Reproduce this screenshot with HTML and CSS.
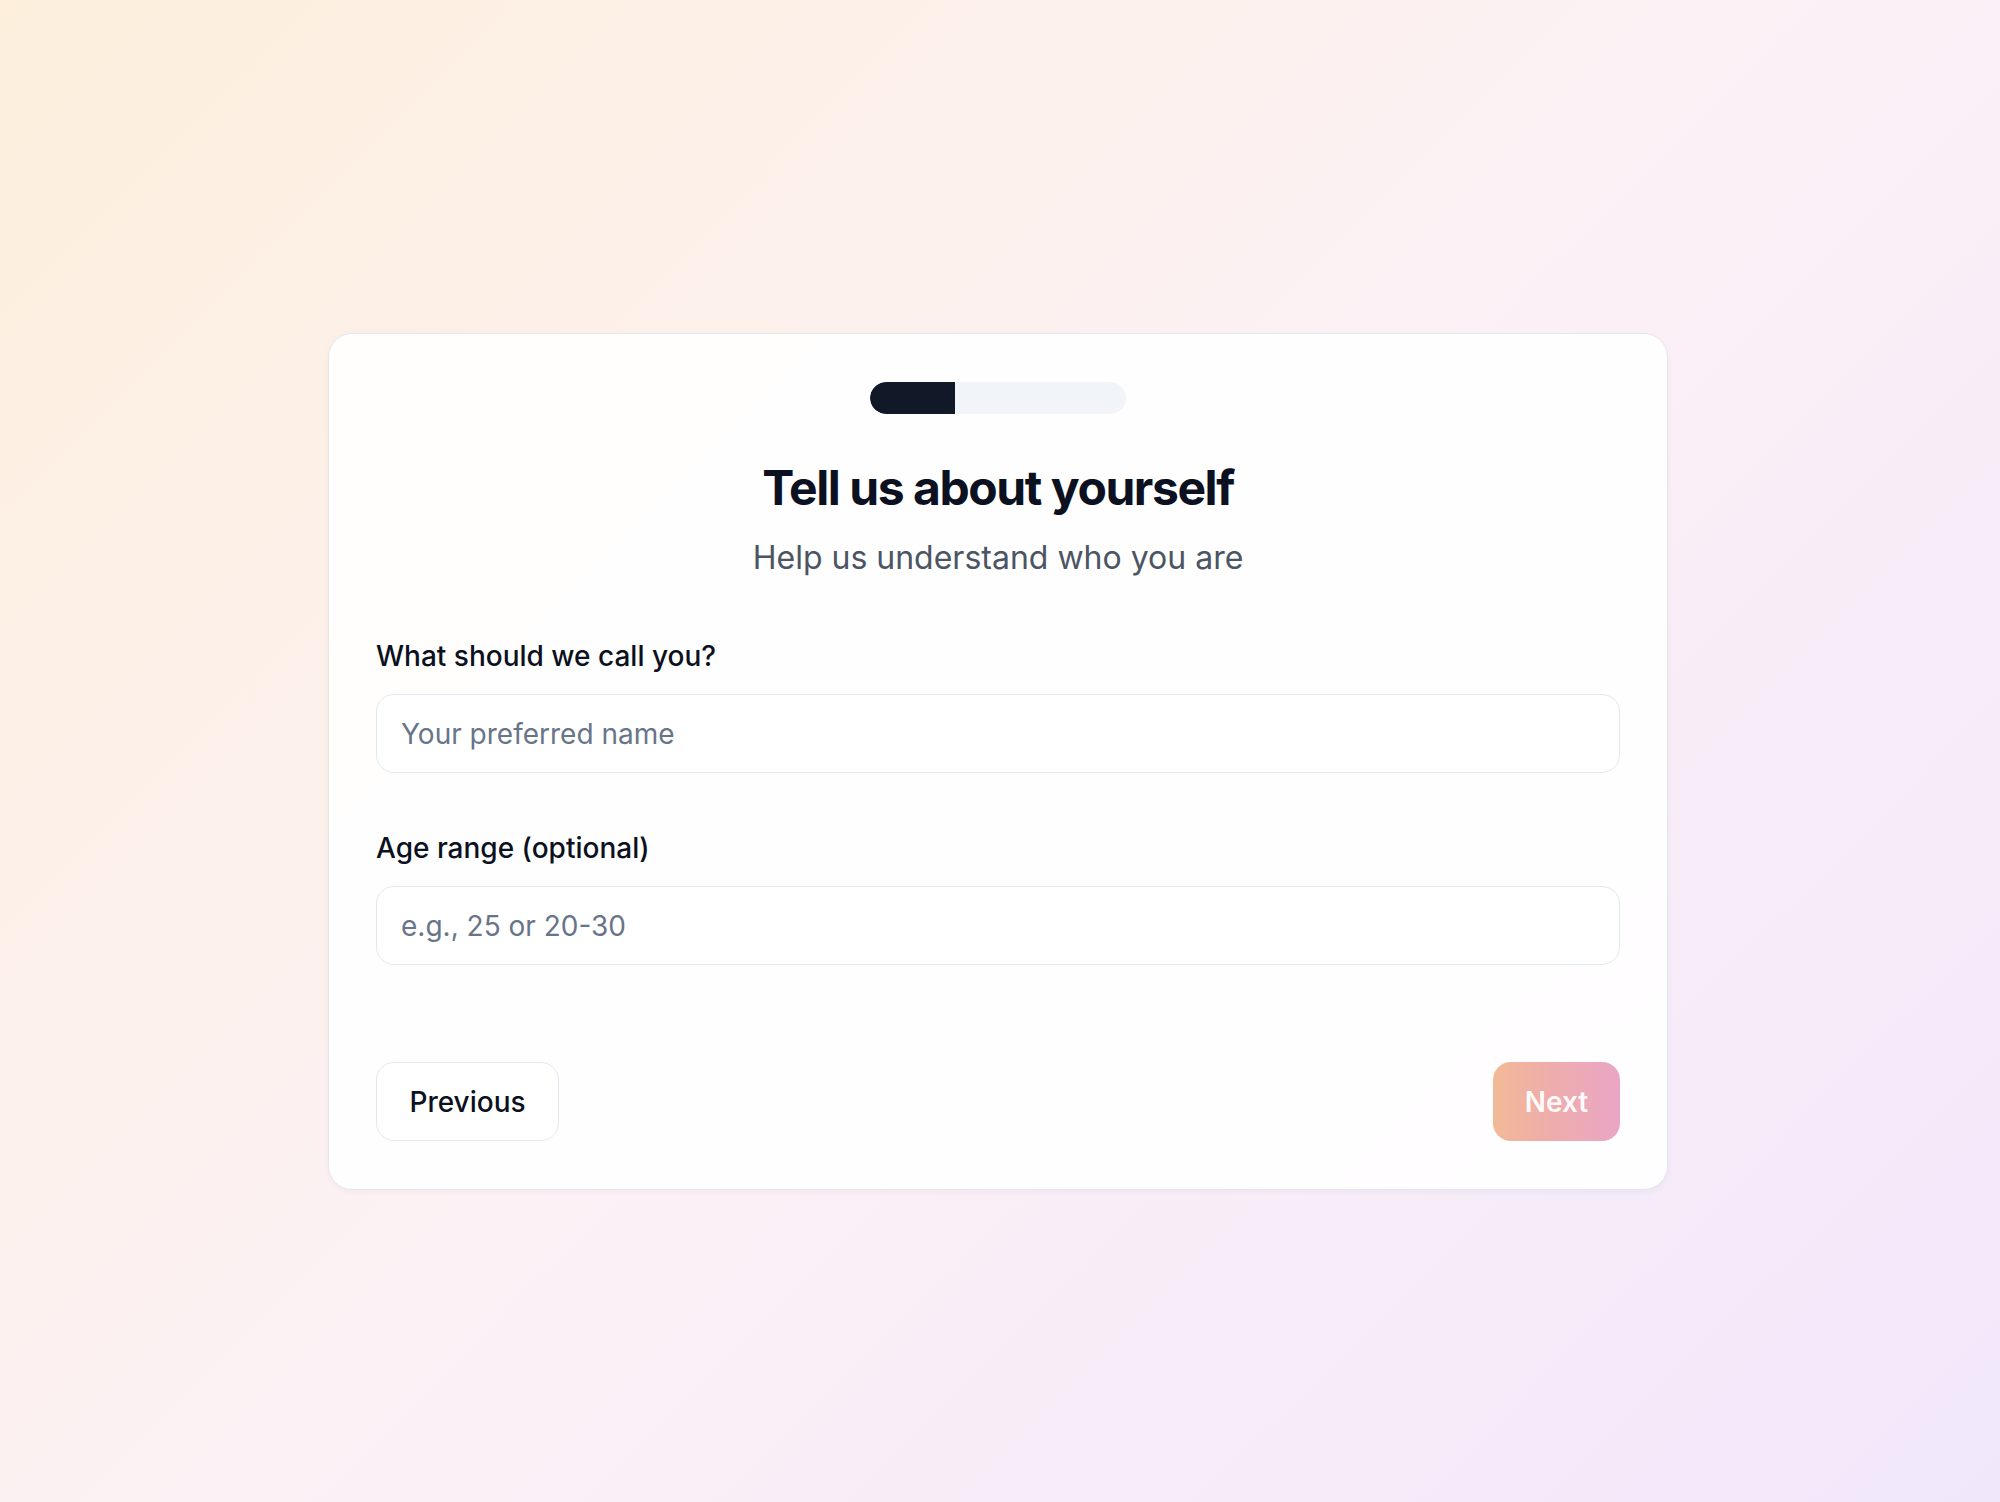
FILE: index.html
```html
<!DOCTYPE html>
<html lang="en">
<head>
<meta charset="utf-8">
<title>Tell us about yourself</title>
<link rel="stylesheet" href="styles.css">
</head>
<body>
<main class="page">
  <section class="card">
    <div class="progress"><div class="progress-fill" style="width:33.33%"></div></div>
    <h1 class="title">Tell us about yourself</h1>
    <p class="subtitle">Help us understand who you are</p>
    <form class="form">
      <div class="field">
        <label class="label" for="name">What should we call you?</label>
        <input class="input" id="name" type="text" placeholder="Your preferred name">
      </div>
      <div class="field">
        <label class="label" for="age">Age range (optional)</label>
        <input class="input" id="age" type="text" placeholder="e.g., 25 or 20-30">
      </div>
    </form>
    <div class="actions">
      <button class="btn btn-secondary" type="button">Previous</button>
      <button class="btn btn-primary" type="button">Next</button>
    </div>
  </section>
</main>
</body>
</html>
```

FILE: styles.css
```css
* { box-sizing: border-box; }
html, body { margin: 0; padding: 0; }
body {
  font-family: Inter, "Noto Sans", "Liberation Sans", sans-serif;
  background: linear-gradient(135deg, #fdefdc 0%, #fcf1f5 50%, #f1e7fb 100%);
  min-height: 1502px;
  color: #0b1120;
}
.page {
  min-height: 1502px;
  display: flex;
  justify-content: center;
  align-items: flex-start;
  padding: 333px 4px 0 0;
}
.card {
  width: 1340px;
  background: rgba(255, 255, 255, 0.9);
  border: 1px solid #e4e7ee;
  border-radius: 24px;
  box-shadow: 0 2px 6px rgba(30, 30, 60, 0.04);
  padding: 48px 47px 48px 47px;
  display: flex;
  flex-direction: column;
  align-items: stretch;
}
.progress {
  align-self: center;
  width: 256px;
  height: 32px;
  border-radius: 16px;
  background: #f1f5f9;
  overflow: hidden;
}
.progress-fill {
  height: 100%;
  background: #111827;
  border-radius: 16px 0 0 16px;
}
.title {
  margin: 44px 0 0;
  text-align: center;
  font-size: 48px;
  line-height: 60px;
  font-weight: 700;
  letter-spacing: -0.03em;
  color: #0b1120;
}
.subtitle {
  margin: 17px 0 0;
  text-align: center;
  font-size: 32px;
  line-height: 45px;
  color: #4b5563;
}
.form {
  margin-top: 56px;
  display: flex;
  flex-direction: column;
  gap: 55px;
}
.field {
  display: flex;
  flex-direction: column;
  gap: 18px;
}
.label {
  font-size: 28px;
  line-height: 40px;
  font-weight: 500;
  color: #0b1120;
}
.input {
  height: 79px;
  border: 1.5px solid #e2e8f0;
  border-radius: 18px;
  padding: 0 24px;
  font-family: inherit;
  font-size: 28px;
  color: #0b1120;
  background: #fff;
  outline: none;
}
.input::placeholder { color: #687589; }
.actions {
  margin-top: 97px;
  display: flex;
  justify-content: space-between;
  align-items: center;
}
.btn {
  height: 79px;
  border-radius: 18px;
  font-family: inherit;
  font-size: 28px;
  font-weight: 500;
  cursor: pointer;
}
.btn-secondary {
  width: 183px;
  background: #fff;
  border: 1.5px solid #e2e8f0;
  color: #0b1120;
}
.btn-primary {
  width: 127px;
  border: none;
  color: rgba(255, 255, 255, 0.95);
  font-weight: 600;
  background: linear-gradient(90deg, #f1ba96 0%, #eeadab 45%, #e9a6c6 100%);
}
```
